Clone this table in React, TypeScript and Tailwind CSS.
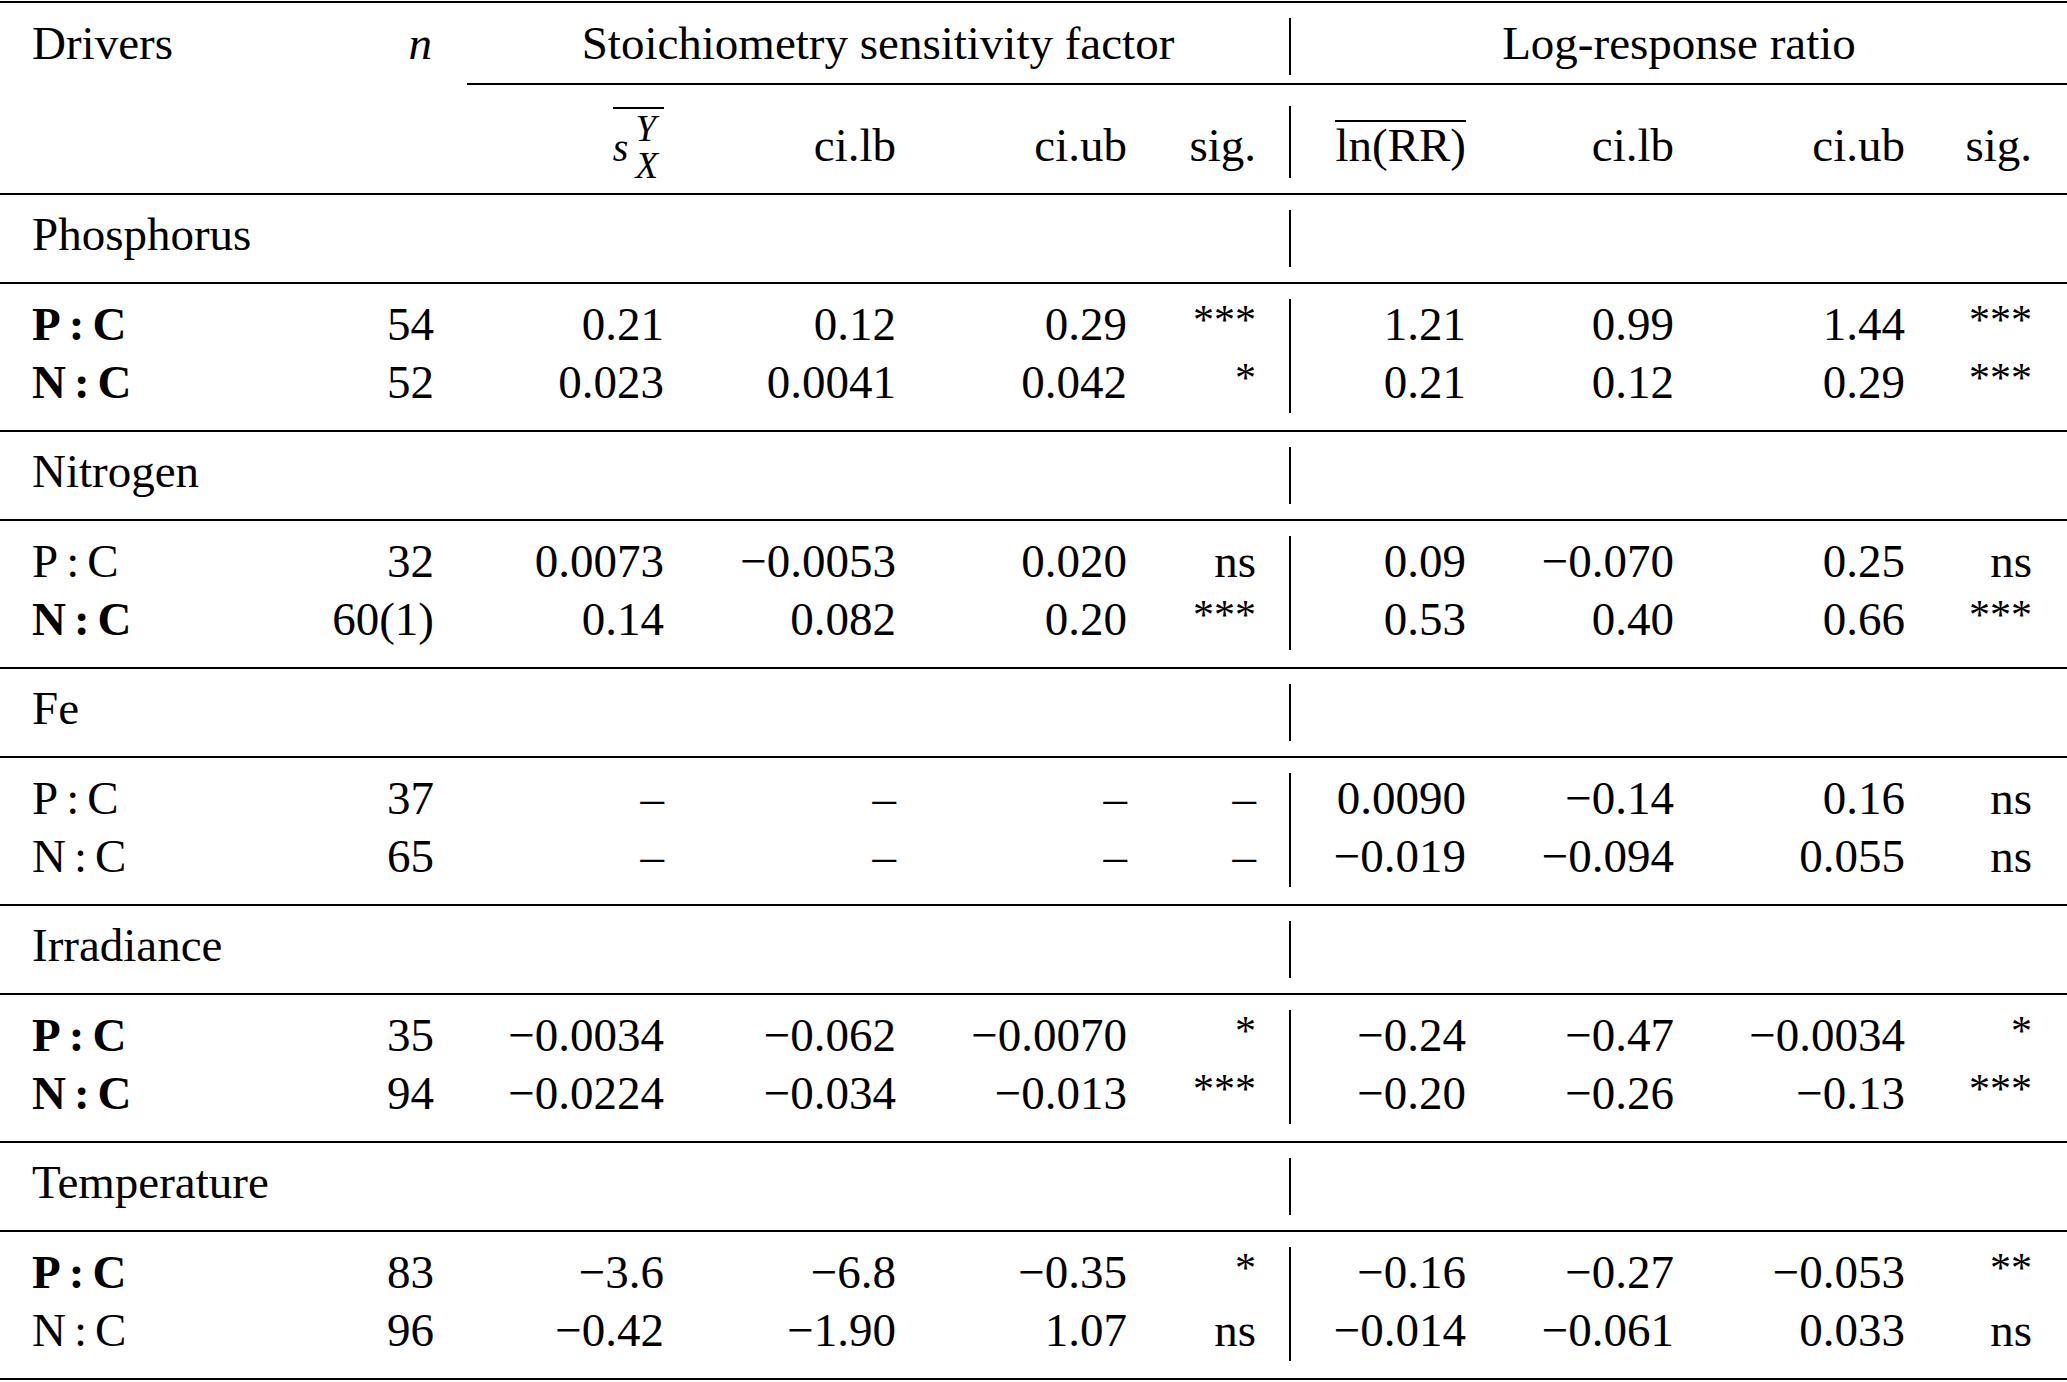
type Row = { a: string; b: string; bold: boolean; n: string; s: string[]; r: string[] };
type Group = { name: string; rows: Row[] };

const GRID =
  'grid grid-cols-[300px_134px_230px_232px_231px_129px_35px_175px_208px_231px_127px_1fr]';

const NA = ['\u2013', '\u2013', '\u2013', '\u2013'];

const GROUPS: Group[] = [
  {
    name: 'Phosphorus',
    rows: [
      { a: 'P', b: 'C', bold: true, n: '54', s: ['0.21', '0.12', '0.29', '***'], r: ['1.21', '0.99', '1.44', '***'] },
      { a: 'N', b: 'C', bold: true, n: '52', s: ['0.023', '0.0041', '0.042', '*'], r: ['0.21', '0.12', '0.29', '***'] },
    ],
  },
  {
    name: 'Nitrogen',
    rows: [
      { a: 'P', b: 'C', bold: false, n: '32', s: ['0.0073', '\u22120.0053', '0.020', 'ns'], r: ['0.09', '\u22120.070', '0.25', 'ns'] },
      { a: 'N', b: 'C', bold: true, n: '60(1)', s: ['0.14', '0.082', '0.20', '***'], r: ['0.53', '0.40', '0.66', '***'] },
    ],
  },
  {
    name: 'Fe',
    rows: [
      { a: 'P', b: 'C', bold: false, n: '37', s: NA, r: ['0.0090', '\u22120.14', '0.16', 'ns'] },
      { a: 'N', b: 'C', bold: false, n: '65', s: NA, r: ['\u22120.019', '\u22120.094', '0.055', 'ns'] },
    ],
  },
  {
    name: 'Irradiance',
    rows: [
      { a: 'P', b: 'C', bold: true, n: '35', s: ['\u22120.0034', '\u22120.062', '\u22120.0070', '*'], r: ['\u22120.24', '\u22120.47', '\u22120.0034', '*'] },
      { a: 'N', b: 'C', bold: true, n: '94', s: ['\u22120.0224', '\u22120.034', '\u22120.013', '***'], r: ['\u22120.20', '\u22120.26', '\u22120.13', '***'] },
    ],
  },
  {
    name: 'Temperature',
    rows: [
      { a: 'P', b: 'C', bold: true, n: '83', s: ['\u22123.6', '\u22126.8', '\u22120.35', '*'], r: ['\u22120.16', '\u22120.27', '\u22120.053', '**'] },
      { a: 'N', b: 'C', bold: false, n: '96', s: ['\u22120.42', '\u22121.90', '1.07', 'ns'], r: ['\u22120.014', '\u22120.061', '0.033', 'ns'] },
    ],
  },
];

function Num({ v }: { v: string }) {
  const star = v.includes('*');
  return <div className={star ? 'text-right text-[42px] leading-[50px]' : 'text-right'}>{v}</div>;
}

function SBar() {
  return (
    <span className="inline-flex items-start border-t-2 border-black pt-px italic">
      <span className="mt-[18px] text-[40px] leading-[40px]">s</span>
      <span className="ml-[7px] mr-[6px] flex flex-col text-[37px] leading-[37px]">
        <span>Y</span>
        <span>X</span>
      </span>
    </span>
  );
}

function GroupBlock({ g }: { g: Group }) {
  return (
    <>
      {/* group title row */}
      <div className={`${GRID} grid-rows-[87px] border-t-2 border-black`}>
        <div className="col-span-6 pl-[32px] pt-[10px]">{g.name}</div>
        <div className="col-start-7 my-[15px] border-r-2 border-black" />
      </div>

      {/* values */}
      <div className={`${GRID} grid-rows-[58px_58px] border-t-2 border-black pt-[11px] pb-[19px]`}>
        <div className="col-start-7 row-start-1 row-span-2 mt-[4px] -mb-[2px] border-r-2 border-black" />
        {g.rows.map((row) => (
          <div key={row.a} className="contents">
            <div className={row.bold ? 'col-start-1 pl-[32px] font-bold' : 'col-start-1 pl-[32px]'}>
              {row.a}
              <span className="mx-[8px]">:</span>
              {row.b}
            </div>
            <div className="text-right">{row.n}</div>
            {row.s.map((v, i) => (
              <Num key={'s' + i} v={v} />
            ))}
            <div className="col-start-8 text-right">{row.r[0]}</div>
            {row.r.slice(1).map((v, i) => (
              <Num key={'r' + i} v={v} />
            ))}
          </div>
        ))}
      </div>
    </>
  );
}

export default function App() {
  return (
    <div className="min-h-screen bg-white pt-px font-['Liberation_Serif','Times_New_Roman',serif] text-[47px] leading-[58px] text-black">
      <div className="border-t-2 border-b-2 border-black">
        {/* header row 1 */}
        <div className={`${GRID} grid-rows-[82px]`}>
          <div className="pl-[32px] pt-[11px]">Drivers</div>
          <div className="pt-[11px] pr-[2px] text-right italic">n</div>
          <div className="col-span-10 ml-[33px] flex border-b-2 border-black">
            <div className="w-[822px] pt-[11px] text-center">Stoichiometry sensitivity factor</div>
            <div className="mt-[15px] mb-[8px] w-[2px] bg-black" />
            <div className="flex-1 pt-[11px] text-center">Log-response ratio</div>
          </div>
        </div>

        {/* header row 2 */}
        <div className={`${GRID} grid-rows-[108px]`}>
          <div className="col-start-3 mt-[22px] flex justify-end self-start">
            <SBar />
          </div>
          <div className="pt-[31px] text-right">ci.lb</div>
          <div className="pt-[31px] text-right">ci.ub</div>
          <div className="pt-[31px] text-right">sig.</div>
          <div className="mt-[21px] mb-[15px] border-r-2 border-black" />
          <div className="pt-[31px] text-right">
            <span className="inline-block border-t-2 border-black leading-[46px]">ln(RR)</span>
          </div>
          <div className="pt-[31px] text-right">ci.lb</div>
          <div className="pt-[31px] text-right">ci.ub</div>
          <div className="pt-[31px] text-right">sig.</div>
        </div>

        {GROUPS.map((g) => (
          <GroupBlock key={g.name} g={g} />
        ))}
      </div>
    </div>
  );
}
